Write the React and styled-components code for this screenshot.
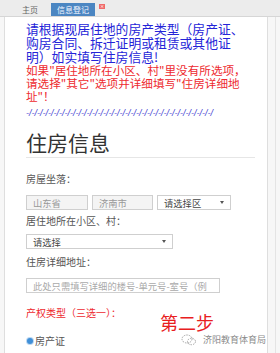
import React from 'react';
import styled, { createGlobalStyle } from 'styled-components';

const Global = createGlobalStyle`
  html, body { margin: 0; padding: 0; background: #f7f7f7; }
  body { width: 280px; height: 353px; overflow: hidden; font-family: "Noto Sans CJK SC", "Noto Sans", sans-serif; }
`;

const Page = styled.div`
  width: 280px;
  height: 353px;
  overflow: hidden;
  display: flex;
  flex-direction: column;
`;

const TabBar = styled.div`
  height: 17px;
  flex: 0 0 17px;
  box-sizing: border-box;
  background: #ececec;
  border-bottom: 1px solid #d6d6d6;
  display: flex;
  align-items: flex-end;
  padding-left: 14px;
`;

const Tab = styled.div`
  height: ${p => (p.$active ? 13 : 14)}px;
  padding: 0 ${p => (p.$active ? 6 : 8)}px;
  margin-right: ${p => (p.$active ? 0 : 5)}px;
  display: flex;
  align-items: center;
  font-size: 8px;
  color: ${p => (p.$active ? '#f2f6ff' : '#666')};
  background: ${p => (p.$active ? '#4b86c2' : 'transparent')};
`;

const CloseBox = styled.div`
  align-self: flex-start;
  margin-top: 4px;
  margin-left: 4px;
  width: 6px;
  height: 5px;
  background: #f06a6a;
  color: #fff;
  font-size: 5px;
  line-height: 5px;
  text-align: center;
  font-family: "DejaVu Sans", sans-serif;
`;

const Body = styled.div`
  flex: 1;
  display: flex;
  min-height: 0;
`;

const Panel = styled.div`
  position: relative;
  margin-left: 4px;
  width: 264px;
  box-sizing: border-box;
  background: #fff;
  border-left: 1px solid #dedede;
  border-right: 1px solid #dedede;
  padding: 5px 12px 0 21px;
  overflow: hidden;
`;

const Gutter = styled.div`
  flex: 1;
  display: flex;
  justify-content: flex-end;
  padding-right: 4px;
`;

const GutterLine = styled.div`
  width: 1px;
  background: #e4e4e4;
`;

const Notice = styled.div`
  font-size: 12.8px;
  line-height: 14px;
  color: #2424d8;
  white-space: nowrap;
`;

const Warning = styled.div`
  font-size: 11.6px;
  line-height: 13px;
  color: #ee2a2f;
  white-space: nowrap;
`;

const Divider = styled.div`
  margin-top: 4px;
  font-family: "Liberation Sans", sans-serif;
  font-style: italic;
  font-size: 9px;
  line-height: 12px;
  color: #3a3ad0;
  white-space: nowrap;
`;

const Heading = styled.div`
  margin-top: 11px;
  font-size: 21px;
  line-height: 25px;
  color: #333;
  padding-bottom: 2px;
  border-bottom: 1px solid #e6e6e6;
`;

const Label = styled.div`
  font-size: 10px;
  line-height: 14px;
  color: ${p => (p.$red ? '#ee2a2f' : '#555')};
  margin-top: ${p => p.$top}px;
`;

const FieldRow = styled.div`
  display: flex;
  gap: 4px;
  margin-top: ${p => p.$top}px;
`;

const Field = styled.div`
  width: ${p => p.$w}px;
  height: 15px;
  box-sizing: border-box;
  border: 1px solid #cfcfcf;
  background: ${p => (p.$disabled ? '#f4f4f4' : '#fff')};
  display: flex;
  align-items: center;
  justify-content: space-between;
  padding: 0 6px 0 6px;
  font-size: 9.3px;
  color: ${p => (p.$placeholder ? '#aaa' : p.$disabled ? '#999' : '#444')};
  white-space: nowrap;
  overflow: hidden;
`;

const Caret = styled.span`
  width: 0;
  height: 0;
  border-left: 2.5px solid transparent;
  border-right: 2.5px solid transparent;
  border-top: 3px solid #555;
  flex: none;
`;

const RadioRow = styled.div`
  display: flex;
  align-items: center;
  gap: 2px;
  margin-top: 14px;
  font-size: 10px;
  line-height: 14px;
  color: #555;
`;

const RadioDot = styled.span`
  width: 6px;
  height: 6px;
  border-radius: 50%;
  background: #3f8fd8;
  box-shadow: 0 0 0 1px #bcd8f2;
  margin-left: 1px;
`;

const StepTag = styled.div`
  position: absolute;
  left: 155px;
  top: 296px;
  font-size: 18px;
  line-height: 18px;
  color: #e8201e;
`;

const Watermark = styled.div`
  position: absolute;
  left: 176px;
  top: 316px;
  display: flex;
  align-items: center;
  gap: 6px;
  font-size: 9px;
  line-height: 14px;
  color: #8a8a8a;
  text-shadow: 0 0 2px #fff;
  white-space: nowrap;
`;

const WeChatIcon = () => (
  <svg width="16" height="12" viewBox="0 0 16 12" fill="none" stroke="#9a9a9a" strokeWidth="0.9">
    <ellipse cx="6" cy="5" rx="5" ry="4" strokeDasharray="1.5 1" />
    <ellipse cx="10.5" cy="7.5" rx="4" ry="3.2" strokeDasharray="1.5 1" />
  </svg>
);

export default function App() {
  return (
    <Page>
      <Global />
      <TabBar>
        <Tab>主页</Tab>
        <Tab $active>信息登记</Tab>
        <CloseBox>×</CloseBox>
      </TabBar>
      <Body>
        <Panel>
          <Notice>
            请根据现居住地的房产类型（房产证、<br />
            购房合同、拆迁证明或租赁或其他证<br />
            明）如实填写住房信息!
          </Notice>
          <Warning>
            如果"居住地所在小区、村"里没有所选项，<br />
            请选择"其它"选项并详细填写"住房详细地<br />
            址"！
          </Warning>
          <Divider>{'-/'.repeat(34)}</Divider>
          <Heading>住房信息</Heading>
          <Label $top={14}>房屋坐落：</Label>
          <FieldRow $top={9}>
            <Field $w={62} $disabled>山东省</Field>
            <Field $w={61} $disabled>济南市</Field>
            <Field $w={74}>请选择区<Caret /></Field>
          </FieldRow>
          <Label $top={4}>居住地所在小区、村：</Label>
          <FieldRow $top={6}>
            <Field $w={147}>请选择<Caret /></Field>
          </FieldRow>
          <Label $top={6}>住房详细地址：</Label>
          <FieldRow $top={9}>
            <Field $w={194} $placeholder>此处只需填写详细的楼号-单元号-室号（例</Field>
          </FieldRow>
          <Label $top={13} $red>产权类型（三选一）：</Label>
          <RadioRow><RadioDot />房产证</RadioRow>
          <StepTag>第二步</StepTag>
          <Watermark><WeChatIcon />济阳教育体育局</Watermark>
        </Panel>
        <Gutter><GutterLine /></Gutter>
      </Body>
    </Page>
  );
}
